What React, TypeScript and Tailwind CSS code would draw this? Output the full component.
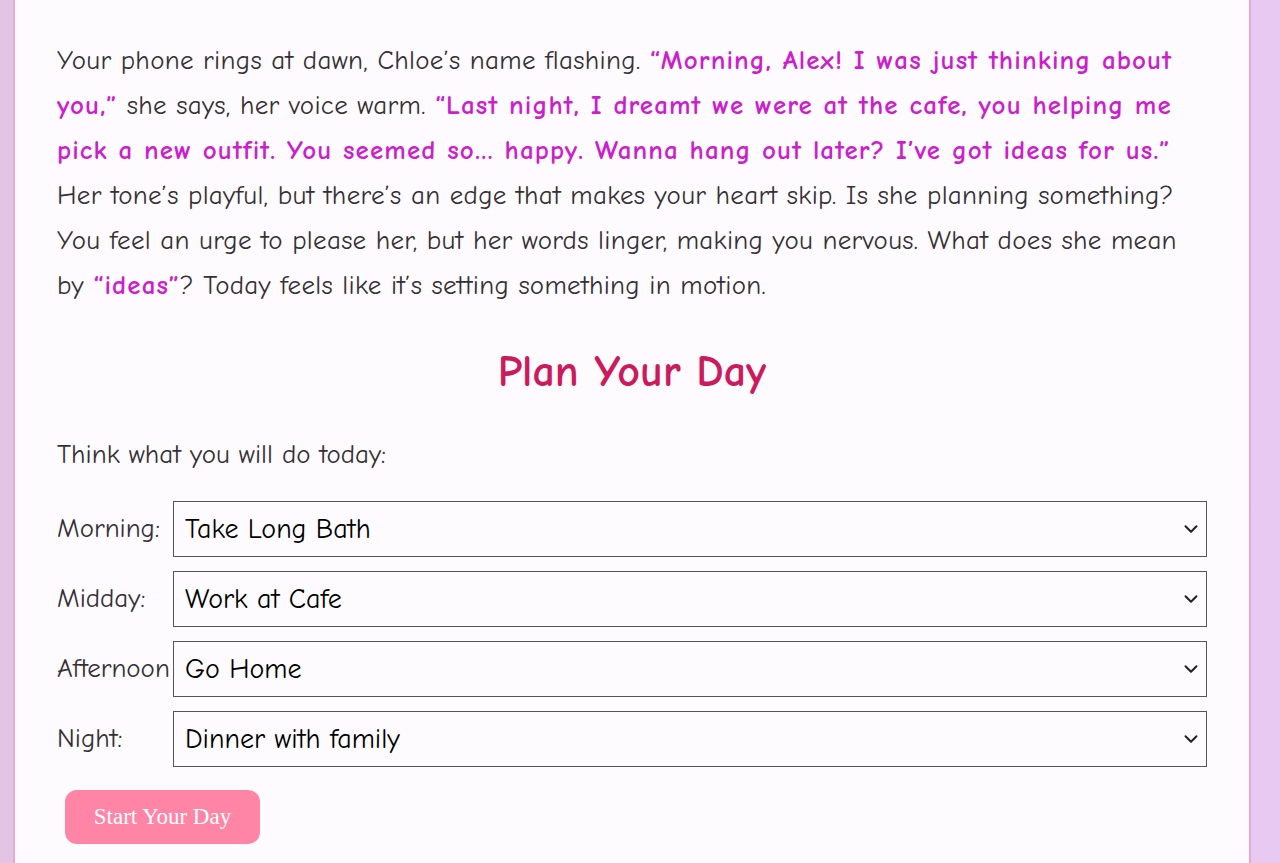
import { ChevronDown } from "lucide-react";

const comic = "font-['Comic_Sans_MS','Comic_Neue','DejaVu_Sans',sans-serif]";

const slots = [
  { label: "Morning:", value: "Take Long Bath", options: ["Take Long Bath", "Go Jogging", "Sleep In"] },
  { label: "Midday:", value: "Work at Cafe", options: ["Work at Cafe", "Go Shopping", "Visit Chloe"] },
  { label: "Afternoon", value: "Go Home", options: ["Go Home", "Go to the Park", "Study"] },
  { label: "Night:", value: "Dinner with family", options: ["Dinner with family", "Watch a Movie", "Go Out with Chloe"] },
];

function Quote({ children }: { children: React.ReactNode }) {
  return <span className="font-bold tracking-[1.1px] text-[#cc1fcc]">{children}</span>;
}

export default function App() {
  return (
    <div className={`min-h-screen bg-gradient-to-r from-[#e2c5e5] via-[#e6c8ec] to-[#e7c9f1] ${comic}`}>
      <div className="ml-[13px] w-[1238px] min-h-screen border-x-2 border-[#f2a5c8] bg-[#fdfbfd] px-[42px] pt-[38px] pb-8">
        <p className="text-[27px] leading-[45px] tracking-[0.3px] text-[#363036]">
          Your phone rings at dawn, Chloe’s name flashing.{" "}
          <Quote>“Morning, Alex! I was just thinking about</Quote>
          <br />
          <Quote>you,”</Quote> she says, her voice warm.{" "}
          <Quote>“Last night, I dreamt we were at the cafe, you helping me</Quote>
          <br />
          <Quote>pick a new outfit. You seemed so… happy. Wanna hang out later? I’ve got ideas for us.”</Quote>
          <br />
          Her tone’s playful, but there’s an edge that makes your heart skip. Is she planning something?
          <br />
          You feel an urge to please her, but her words linger, making you nervous. What does she mean
          <br />
          by <Quote>“ideas”</Quote>? Today feels like it’s setting something in motion.
        </p>

        <h2 className="mt-[39px] text-center text-[44px] font-bold leading-[50px] text-[#cc1a5e]">
          Plan Your Day
        </h2>

        <p className="mt-[35px] text-[27px] leading-[45px] text-[#363036]">Think what you will do today:</p>

        <div className="mt-[24px] flex flex-col gap-[14px]">
          {slots.map((s) => (
            <div key={s.label} className="flex items-center">
              <span className="w-[116px] shrink-0 whitespace-nowrap text-[27px] text-[#363036]">{s.label}</span>
              <div className="relative flex-1">
                <select
                  defaultValue={s.value}
                  className={`h-[56px] w-full appearance-none rounded-none border border-[#555] bg-transparent pl-[11px] text-[28px] text-black outline-none ${comic}`}
                >
                  {s.options.map((o) => (
                    <option key={o}>{o}</option>
                  ))}
                </select>
                <ChevronDown
                  size={22}
                  strokeWidth={2.2}
                  className="pointer-events-none absolute right-[5px] top-1/2 -translate-y-1/2 text-[#222]"
                />
              </div>
            </div>
          ))}
        </div>

        <button className="ml-[8px] mt-[23px] h-[54px] w-[195px] rounded-[12px] bg-[#ff85a6] font-['Liberation_Serif',serif] text-[23px] text-white">
          Start Your Day
        </button>
      </div>
    </div>
  );
}
